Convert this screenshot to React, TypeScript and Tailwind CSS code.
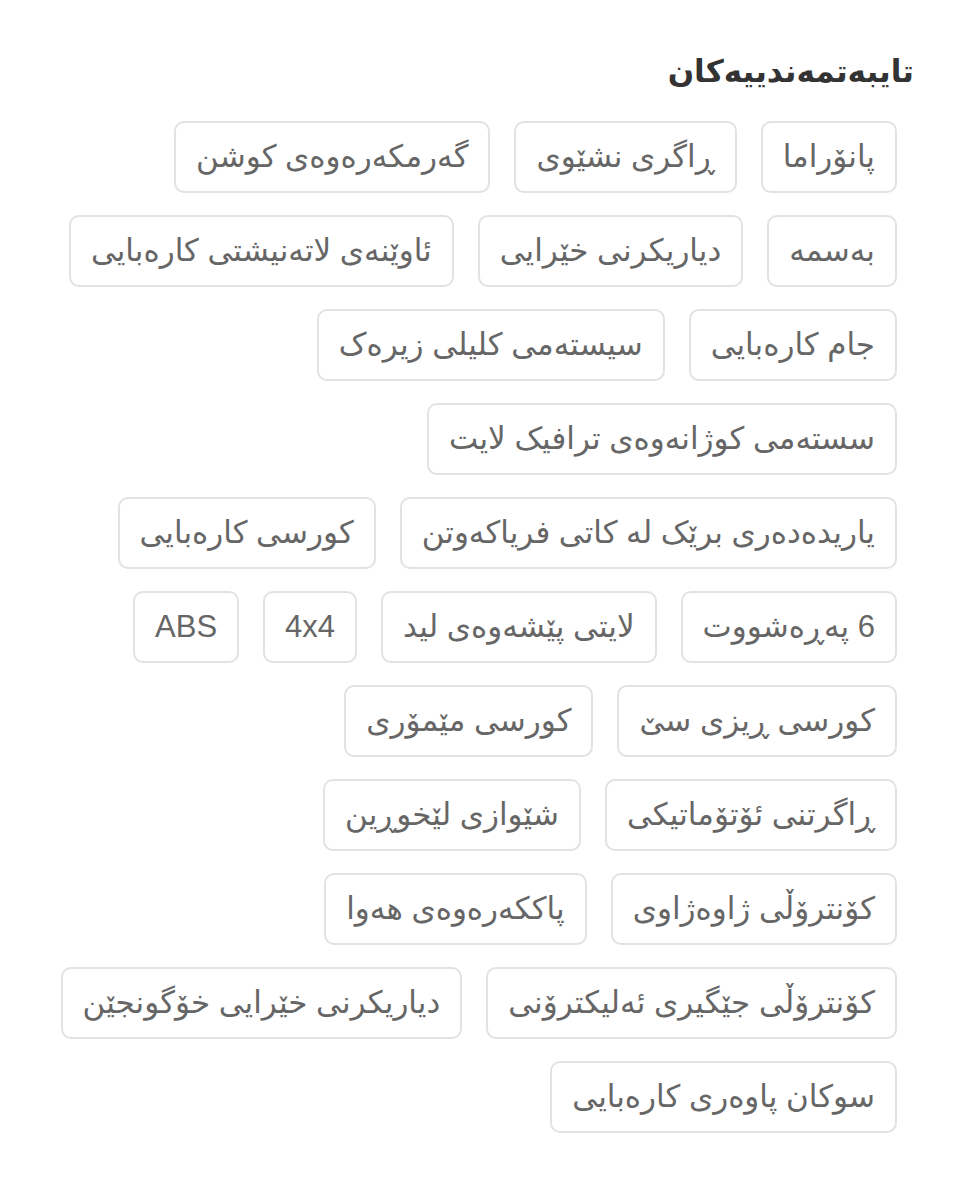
import React from "react";

const features = [
  "پانۆراما",
  "ڕاگری نشێوی",
  "گەرمکەرەوەی کوشن",
  "بەسمە",
  "دیاریکرنی خێرایی",
  "ئاوێنەی لاتەنیشتی کارەبایی",
  "جام کارەبایی",
  "سیستەمی کلیلی زیرەک",
  "سستەمی کوژانەوەی ترافیک لایت",
  "یاریدەدەری برێک لە کاتی فریاکەوتن",
  "کورسی کارەبایی",
  "6 پەڕەشووت",
  "لایتی پێشەوەی لید",
  "4x4",
  "ABS",
  "کورسی ڕیزی سێ",
  "کورسی مێمۆری",
  "ڕاگرتنی ئۆتۆماتیکی",
  "شێوازی لێخوڕین",
  "کۆنترۆڵی ژاوەژاوی",
  "پاککەرەوەی هەوا",
  "کۆنترۆڵی جێگیری ئەلیکترۆنی",
  "دیاریکرنی خێرایی خۆگونجێن",
  "سوکان پاوەری کارەبایی",
];

const App: React.FC = () => {
  return (
    <div dir="rtl" className="min-h-screen bg-white font-['Liberation_Sans','DejaVu_Sans',sans-serif]">
      <div className="pt-[48px] pr-[46px] pl-[46px]">
        <h2 className="text-[31px] font-bold leading-[48px] text-[#333333]">تایبەتمەندییەکان</h2>
        {/* feature chips */}
        <div className="mt-[25px] mr-[17px] flex flex-wrap gap-x-[24px] gap-y-[22px]">
          {features.map((f) => (
            <span
              key={f}
              className="flex h-[72px] items-center rounded-[10px] border-2 border-[#e2e2e2] px-[20px] text-[31px] text-[#666666]"
            >
              {f}
            </span>
          ))}
        </div>
      </div>
    </div>
  );
};

export default App;
